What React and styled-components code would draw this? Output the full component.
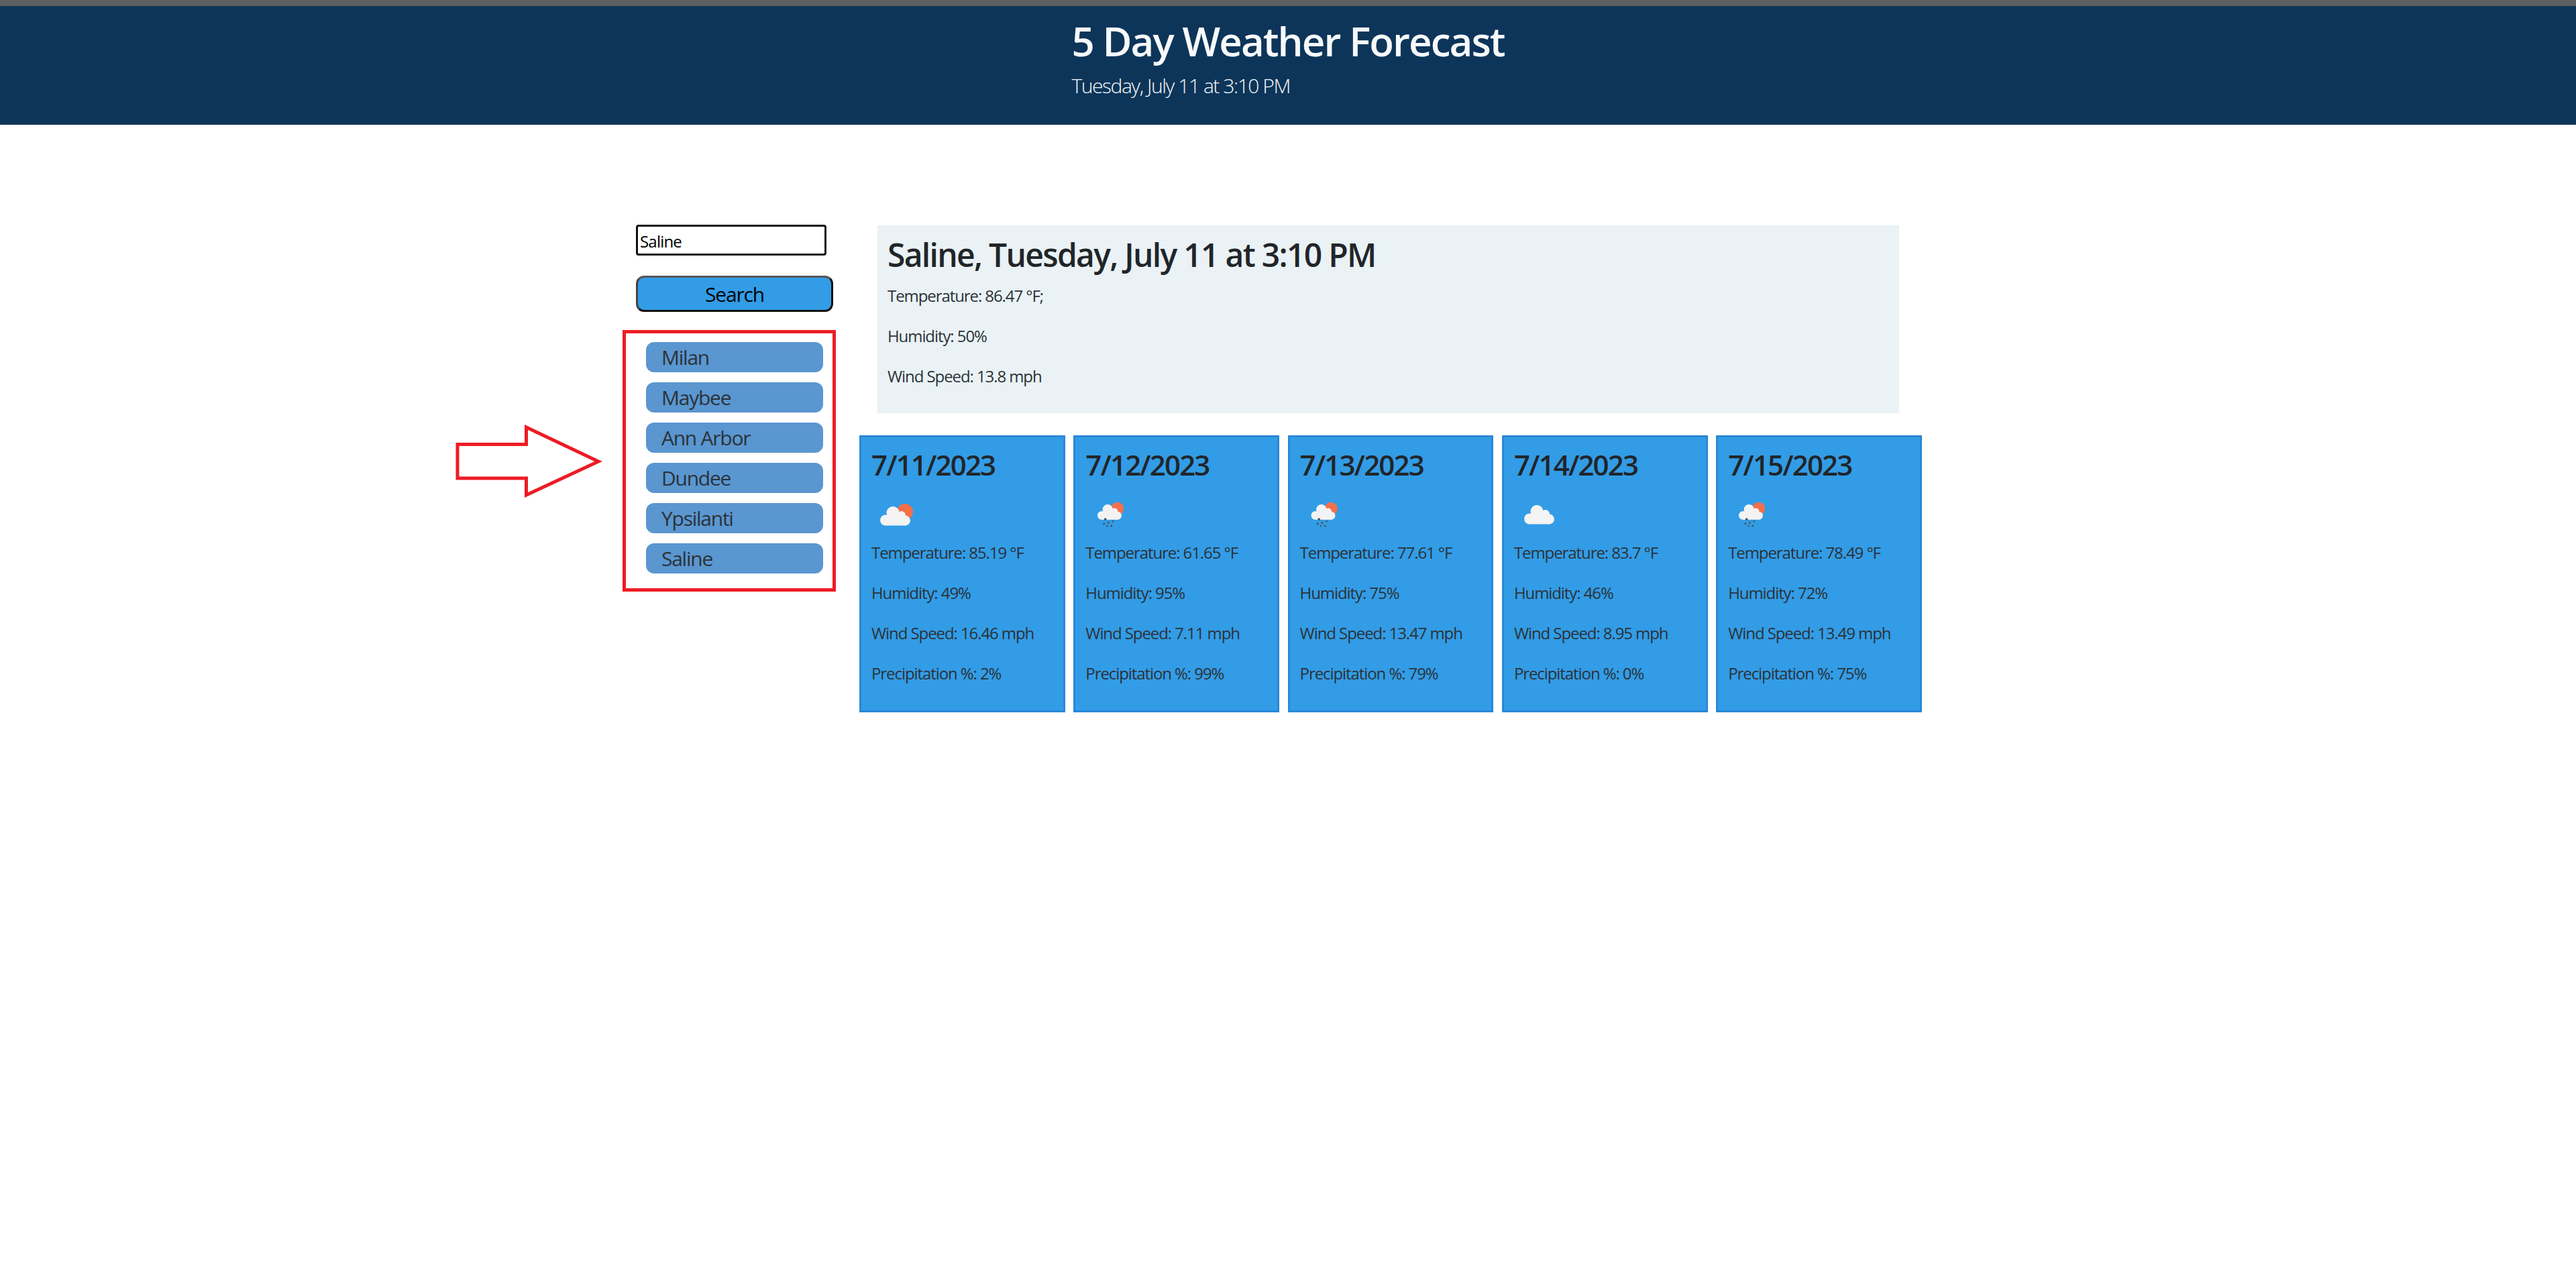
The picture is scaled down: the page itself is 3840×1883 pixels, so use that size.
import styled, { createGlobalStyle } from "styled-components";

const FONT = `"Open Sans", "Noto Sans", "Liberation Sans", sans-serif`;

const GlobalStyle = createGlobalStyle`
  html, body {
    margin: 0;
    padding: 0;
    background: #fff;
    color: #212529;
    font-family: ${FONT};
  }
  * { box-sizing: border-box; }
`;

const Page = styled.div`
  min-height: 1883px;
  background: #fff;
`;

const Header = styled.header`
  height: 186px;
  background: #0d3559;
  border-top: 9px solid #5f5f5f;
  color: #f8f9fa;
  display: flex;
  justify-content: center;
`;

const HeaderText = styled.div`
  display: flex;
  flex-direction: column;
  padding-top: 16px;
`;

const Title = styled.h1`
  margin: 0;
  font-size: 60px;
  line-height: 72px;
  font-weight: 600;
  letter-spacing: -1.9px;
`;

const Subtitle = styled.p`
  margin: 8px 0 0;
  font-size: 30px;
  line-height: 45px;
  font-weight: 300;
  letter-spacing: -1.45px;
`;

const Main = styled.main`
  display: flex;
  gap: 35px;
  padding: 149px 0 0 928px;
`;

const Sidebar = styled.aside`
  width: 318px;
  display: flex;
  flex-direction: column;
`;

const CityInput = styled.input`
  width: 284px;
  height: 46px;
  margin-left: 20px;
  padding: 2px 3px 0;
  border: 3px solid #111;
  border-radius: 4px;
  background: #fff;
  color: #000;
  font-family: ${FONT};
  font-size: 24px;
  letter-spacing: -0.8px;
  outline: none;
`;

const SearchButton = styled.button`
  width: 294px;
  height: 54px;
  margin: 30px 0 27px 20px;
  border: 3px solid #111;
  border-top-color: #555;
  border-left-color: #444;
  border-radius: 12px;
  background: #329ce6;
  color: #000;
  font-family: ${FONT};
  font-size: 30px;
  letter-spacing: -1.2px;
  padding: 0;
`;

const CityList = styled.div`
  position: relative;
  height: 390px;
  border: 5px solid #ed1c24;
  padding: 13px 14px 0 30px;
  display: flex;
  flex-direction: column;
  gap: 15px;
`;

const CityButton = styled.button`
  height: 45px;
  border: 0;
  border-radius: 12px;
  background: #5a96d0;
  color: #2b3238;
  font-family: ${FONT};
  font-size: 30px;
  line-height: 45px;
  letter-spacing: -1.25px;
  text-align: left;
  padding: 0 0 0 23px;
`;

const Arrow = styled.svg`
  position: absolute;
  left: -254px;
  top: 136px;
  width: 222px;
  height: 114px;
`;

const Content = styled.section`
  width: 1584px;
  display: flex;
  flex-direction: column;
  gap: 33px;
`;

const Current = styled.div`
  margin: 1px 0 0 27px;
  width: 1523px;
  height: 280px;
  padding: 15px;
  background: #eaf2f5;
`;

const CurrentTitle = styled.h2`
  margin: 0 0 14px;
  font-size: 48px;
  line-height: 58px;
  font-weight: 600;
  letter-spacing: -1.7px;
`;

const Stat = styled.p`
  margin: 0 0 24px;
  font-size: 24px;
  line-height: 36px;
  color: #2b3238;
  letter-spacing: -1.08px;
`;

const Forecast = styled.div`
  display: flex;
  gap: 12.5px;
`;

const Card = styled.article`
  width: 307px;
  height: 413px;
  padding: 15px;
  border: 3px solid #2a88d8;
  background: #329ce6;
`;

const CardDate = styled.h3`
  margin: 1px 0 13px;
  font-size: 42px;
  line-height: 50px;
  font-weight: 600;
  letter-spacing: -1.85px;
`;

const IconSlot = styled.div`
  height: 75px;
`;

const IconSvg = styled.svg`
  display: block;
`;

// cloud drawn at 45 x 28.5, the smaller icons scale it down to 36 wide
function WeatherIcon({ sun, rain, small, x, y }) {
  return (
    <IconSvg width="75" height="75" viewBox="0 0 75 75" aria-hidden="true">
      <g transform={`translate(${x} ${y}) scale(${small ? 0.8 : 1})`}>
        {sun && <circle cx="37" cy="8" r="12" fill="#f2704a" />}
        <g fill="#f3f3f3">
          <circle cx="8" cy="20.5" r="8" />
          <circle cx="19" cy="9.5" r="9.5" />
          <circle cx="31.6" cy="13.5" r="6.5" />
          <circle cx="37.5" cy="21" r="7.5" />
          <rect x="8" y="14" width="30" height="14.5" />
        </g>
        {rain && (
          <g fill="#4a5560">
            <circle cx="14.6" cy="27.5" r="2.3" />
            <circle cx="12.1" cy="35.9" r="1.9" />
            <circle cx="20.4" cy="34.1" r="1.9" />
            <circle cx="28.7" cy="31.6" r="1.7" />
            <circle cx="17.9" cy="40" r="1.7" />
            <circle cx="25.9" cy="40" r="1.9" />
          </g>
        )}
      </g>
    </IconSvg>
  );
}

const CITIES = ["Milan", "Maybee", "Ann Arbor", "Dundee", "Ypsilanti", "Saline"];

const DAYS = [
  { date: "7/11/2023", temp: "85.19", hum: "49", wind: "16.46", rainPct: "2", icon: { sun: true, x: 13, y: 24 } },
  { date: "7/12/2023", temp: "61.65", hum: "95", wind: "7.11", rainPct: "99", icon: { sun: true, rain: true, small: true, x: 18, y: 21 } },
  { date: "7/13/2023", temp: "77.61", hum: "75", wind: "13.47", rainPct: "79", icon: { sun: true, rain: true, small: true, x: 16.5, y: 21 } },
  { date: "7/14/2023", temp: "83.7", hum: "46", wind: "8.95", rainPct: "0", icon: { x: 15, y: 22 } },
  { date: "7/15/2023", temp: "78.49", hum: "72", wind: "13.49", rainPct: "75", icon: { sun: true, rain: true, small: true, x: 16, y: 21 } },
];

export default function App() {
  return (
    <Page>
      <GlobalStyle />
      <Header>
        <HeaderText>
          <Title>5 Day Weather Forecast</Title>
          <Subtitle>Tuesday, July 11 at 3:10 PM</Subtitle>
        </HeaderText>
      </Header>
      <Main>
        <Sidebar>
          <CityInput defaultValue="Saline" />
          <SearchButton>Search</SearchButton>
          <CityList>
            <Arrow viewBox="0 0 222 114" aria-hidden="true">
              <path
                d="M3 29.5 H105.5 V4 L213 55 L105.5 105 V80 H3 Z"
                fill="#fff"
                stroke="#ed1c24"
                strokeWidth="5"
              />
            </Arrow>
            {CITIES.map((c) => (
              <CityButton key={c}>{c}</CityButton>
            ))}
          </CityList>
        </Sidebar>
        <Content>
          <Current>
            <CurrentTitle>Saline, Tuesday, July 11 at 3:10 PM</CurrentTitle>
            <Stat>Temperature: 86.47 °F;</Stat>
            <Stat>Humidity: 50%</Stat>
            <Stat>Wind Speed: 13.8 mph</Stat>
          </Current>
          <Forecast>
            {DAYS.map((d) => (
              <Card key={d.date}>
                <CardDate>{d.date}</CardDate>
                <IconSlot>
                  <WeatherIcon {...d.icon} />
                </IconSlot>
                <Stat>Temperature: {d.temp} °F</Stat>
                <Stat>Humidity: {d.hum}%</Stat>
                <Stat>Wind Speed: {d.wind} mph</Stat>
                <Stat>Precipitation %: {d.rainPct}%</Stat>
              </Card>
            ))}
          </Forecast>
        </Content>
      </Main>
    </Page>
  );
}
